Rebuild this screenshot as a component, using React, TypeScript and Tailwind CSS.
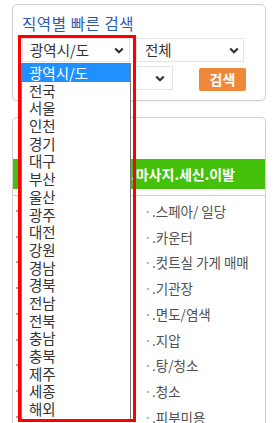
import React from 'react'

const regions = ['광역시/도', '전국', '서울', '인천', '경기', '대구', '부산', '울산', '광주', '대전', '강원', '경남', '경북', '전남', '전북', '충남', '충북', '제주', '세종', '해외']

const rightJobs = ['.스페아/ 일당', '.카운터', '.컷트실 가게 매매', '.기관장', '.면도/염색', '.지압', '.탕/청소', '.청소', '.피부미용']

function Chevron() {
    return (
        <svg width="10" height="7" viewBox="0 0 10 7" className="shrink-0">
            <path d="M1.2 1.5 L5 5.2 L8.8 1.5" fill="none" stroke="#333" strokeWidth="2.2" />
        </svg>
    )
}

function FakeSelect({ label, className }: { label: string; className: string }) {
    return (
        <div className={`h-[24px] flex items-center justify-between bg-white border border-[#e3e3e3] text-[14.5px] text-[#333] ${className}`}>
            <span className="leading-[24px]">{label}</span>
            <Chevron />
        </div>
    )
}

export default function App() {
    return (
        <main
            className="relative w-[275px] h-[423px] overflow-hidden bg-white pl-[12px] pr-[9px] pt-[4px] flex flex-col"
            style={{ fontFamily: '"Noto Sans CJK KR", "Noto Sans", sans-serif' }}
        >
            {/* 지역 검색 패널 */}
            <section className="h-[97px] shrink-0 rounded-[5px] border border-[#d0d0d0] bg-white pl-[9px] pt-[8px] shadow-[0_1px_2px_rgba(0,0,0,0.06)]">
                <h2 className="text-[15.5px] leading-[21px] font-normal text-[#2b5cb0] tracking-[0.6px]">직역별 빠른 검색</h2>
                <div className="mt-[4px] flex gap-[6px]">
                    <FakeSelect label="광역시/도" className="w-[108px] pl-[7px] pr-[5px]" />
                    <FakeSelect label="전체" className="w-[108px] pl-[8px] pr-[4px]" />
                </div>
                <div className="mt-[4px] flex items-start gap-[26px]">
                    <FakeSelect label="" className="w-[151px] pl-[7px] pr-[7px]" />
                    <button className="mt-[2px] w-[47px] h-[23px] rounded-[2px] bg-[#f0883a] text-white text-[14px] font-bold leading-[23px]">
                        검색
                    </button>
                </div>
            </section>

            {/* 업종 패널 */}
            <section className="mt-[16px] flex-1 rounded-t-[5px] border border-b-0 border-[#d0d0d0] bg-white pt-[10px]">
                <h2 className="pl-[103px] text-[15.5px] leading-[21px] font-normal text-[#2b5cb0]">색</h2>
                <div className="mt-[10px] h-[30px] bg-[#44c10a] flex items-center justify-end pr-[30px] text-white text-[14px] font-bold">
                    .마사지.세신.이발
                </div>
                <div className="mt-[6px] border-t border-[#cfcfcf] pt-[2px] grid grid-cols-2">
                    <ul>
                        {rightJobs.map((job) => (
                            <li key={job} className="h-[25.75px] flex items-center pl-[3px]">
                                <span className="w-[2px] h-[2px] bg-[#c99]" />
                            </li>
                        ))}
                    </ul>
                    <ul>
                        {rightJobs.map((job) => (
                            <li key={job} className="h-[25.75px] flex items-center pl-[5px] text-[13.5px] text-[#505050]">
                                <span className="w-[8px] text-[#999]">·</span>
                                {job}
                            </li>
                        ))}
                    </ul>
                </div>
            </section>

            {/* 펼쳐진 드롭다운 */}
            <ul className="absolute left-[21px] top-[63px] w-[110px] h-[357px] border border-[#7a7a7a] bg-white overflow-hidden">
                {regions.map((r, i) => (
                    <li
                        key={r}
                        className={`h-[17.7px] leading-[17.7px] pl-[7px] text-[14.5px] ${i === 0 ? 'bg-[#1e90ff] text-white' : 'text-[#333]'}`}
                    >
                        {r}
                    </li>
                ))}
            </ul>

            {/* 강조 테두리 */}
            <div className="absolute left-[18px] top-[35px] w-[118px] h-[387px] border-[3px] border-[#ff0000] pointer-events-none" />
        </main>
    )
}
